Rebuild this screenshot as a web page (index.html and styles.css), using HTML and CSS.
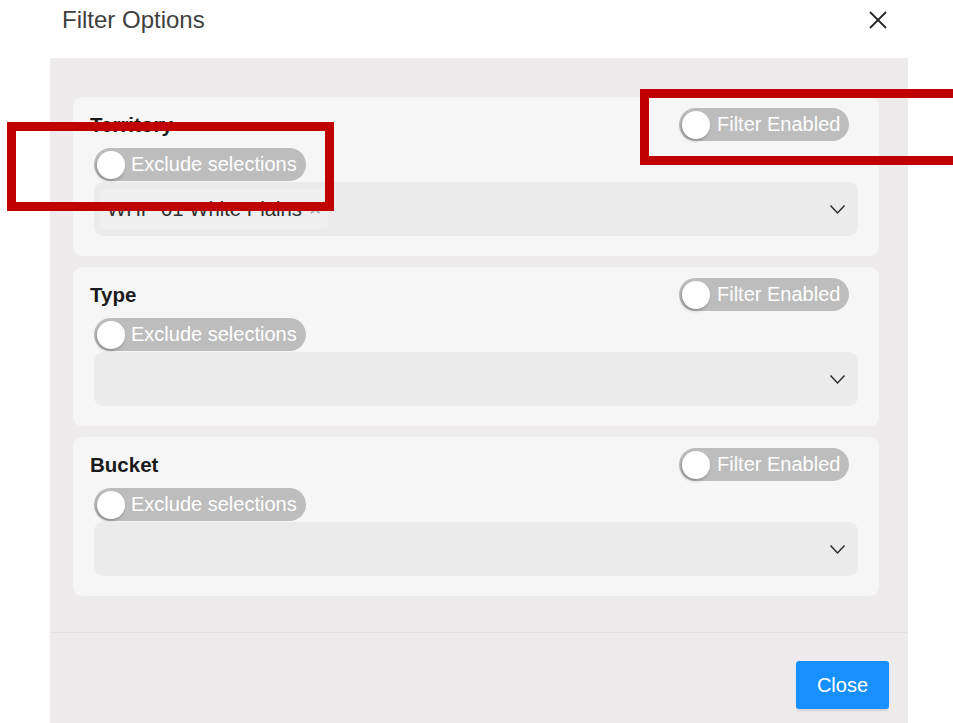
FILE: index.html
```html
<!DOCTYPE html>
<html lang="en">
<head>
<meta charset="utf-8">
<title>Filter Options</title>
<link rel="stylesheet" href="styles.css">
</head>
<body>
<div class="modal">
  <header class="modal-header">
    <h1 class="modal-title">Filter Options</h1>
    <button class="modal-close" aria-label="Close">
      <svg width="20" height="20" viewBox="0 0 20 20"><path d="M2 2 L18 18 M18 2 L2 18" stroke="#262626" stroke-width="1.8" fill="none"/></svg>
    </button>
  </header>

  <div class="modal-panel">
    <div class="modal-body">
      <section class="filter-card">
        <div class="filter-head">
          <span class="filter-label">Territory</span>
          <span class="switch switch-enabled"><span class="knob"></span><span class="switch-text">Filter Enabled</span></span>
        </div>
        <span class="switch switch-exclude"><span class="knob"></span><span class="switch-text">Exclude selections</span></span>
        <div class="select">
          <span class="tag">WHP-01 White Plains <span class="tag-x">×</span></span>
          <svg class="chevron" width="17" height="11" viewBox="0 0 17 11"><path d="M1.5 1.5 L8.5 9 L15.5 1.5" stroke="#2b2b2b" stroke-width="1.5" fill="none"/></svg>
        </div>
      </section>

      <section class="filter-card">
        <div class="filter-head">
          <span class="filter-label">Type</span>
          <span class="switch switch-enabled"><span class="knob"></span><span class="switch-text">Filter Enabled</span></span>
        </div>
        <span class="switch switch-exclude"><span class="knob"></span><span class="switch-text">Exclude selections</span></span>
        <div class="select">
          <svg class="chevron" width="17" height="11" viewBox="0 0 17 11"><path d="M1.5 1.5 L8.5 9 L15.5 1.5" stroke="#2b2b2b" stroke-width="1.5" fill="none"/></svg>
        </div>
      </section>

      <section class="filter-card">
        <div class="filter-head">
          <span class="filter-label">Bucket</span>
          <span class="switch switch-enabled"><span class="knob"></span><span class="switch-text">Filter Enabled</span></span>
        </div>
        <span class="switch switch-exclude"><span class="knob"></span><span class="switch-text">Exclude selections</span></span>
        <div class="select">
          <svg class="chevron" width="17" height="11" viewBox="0 0 17 11"><path d="M1.5 1.5 L8.5 9 L15.5 1.5" stroke="#2b2b2b" stroke-width="1.5" fill="none"/></svg>
        </div>
      </section>
    </div>

    <footer class="modal-footer">
      <button class="btn-primary">Close</button>
    </footer>
  </div>
</div>

<!-- highlight frames drawn over the dialog -->
<div class="highlight highlight-exclude"></div>
<div class="highlight highlight-enabled"></div>
</body>
</html>
```

FILE: styles.css
```css
html, body {
  margin: 0;
  padding: 0;
  height: 100%;
  overflow: hidden;
  background: #ffffff;
  font-family: "Liberation Sans", Arial, sans-serif;
}

.modal {
  position: relative;
  width: 953px;
  height: 723px;
}

.modal-header {
  height: 58px;
  display: flex;
  align-items: flex-start;
  justify-content: space-between;
  padding: 0 65px 0 62px;
  box-sizing: border-box;
}

.modal-title {
  margin: 6px 0 0;
  font-size: 24px;
  font-weight: normal;
  color: #404040;
  line-height: 27px;
}

.modal-close {
  margin-top: 10px;
  padding: 0;
  border: 0;
  background: none;
  width: 20px;
  height: 20px;
  display: block;
}

.modal-close svg { display: block; }

.modal-panel {
  margin-left: 50px;
  width: 858px;
  height: 665px;
  background: #edebeb;
  display: flex;
  flex-direction: column;
}

.modal-body {
  padding: 39px 29px 0 23px;
  height: 575px;
  box-sizing: border-box;
  display: flex;
  flex-direction: column;
  gap: 11px;
  border-bottom: 1px solid #e2e0e0;
}

.filter-card {
  background: #f6f6f6;
  border-radius: 9px;
  padding: 11px 21px 19px 21px;
  display: flex;
  flex-direction: column;
  align-items: flex-start;
  height: 159px;
  box-sizing: border-box;
}

.filter-head {
  align-self: stretch;
  display: flex;
  align-items: center;
  justify-content: space-between;
  height: 33px;
  padding-right: 9px;
}

.filter-label {
  margin-left: -4px;
  font-size: 20.5px;
  font-weight: bold;
  color: #1a1a1a;
}

.switch {
  display: inline-flex;
  align-items: center;
  height: 33px;
  border-radius: 17px;
  background: #bdbdbd;
  box-sizing: border-box;
  padding-left: 3px;
}

.switch-exclude {
  margin-top: 7px;
  width: 212px;
}

.switch-enabled {
  width: 170px;
}

.knob {
  width: 28px;
  height: 28px;
  border-radius: 50%;
  background: #ffffff;
  box-shadow: -1px 2px 3px rgba(0, 0, 0, 0.25);
  flex: none;
}

.switch-text {
  margin-left: 6px;
  color: #ffffff;
  font-size: 20px;
  white-space: nowrap;
}

.switch-enabled .switch-text { margin-left: 7px; }

.select {
  margin-top: 1px;
  align-self: stretch;
  height: 54px;
  border-radius: 9px;
  background: #ecebeb;
  display: flex;
  align-items: center;
  padding: 0 12px 0 6px;
  box-sizing: border-box;
}

.tag {
  height: 40px;
  padding: 0 7px 0 7px;
  display: inline-flex;
  align-items: center;
  background: #f0efef;
  border-radius: 3px;
  font-size: 20.3px;
  color: #2e2e2e;
  white-space: nowrap;
}

.tag-x {
  margin-left: 7px;
  color: #a0a0a0;
  font-size: 21px;
}

.chevron {
  margin-left: auto;
  display: block;
}

.modal-footer {
  flex: 1;
  display: flex;
  justify-content: flex-end;
  align-items: flex-start;
  padding: 28px 19px 0 0;
}

.btn-primary {
  width: 93px;
  height: 48px;
  border: 0;
  border-radius: 3px;
  background: #1890ff;
  color: #ffffff;
  font-family: "Liberation Sans", Arial, sans-serif;
  font-size: 20px;
  box-shadow: 0 2px 2px rgba(0, 0, 0, 0.1);
}

.highlight {
  position: absolute;
  border: 9px solid #c00000;
  box-sizing: border-box;
}

.highlight-exclude {
  left: 7px;
  top: 122px;
  width: 327px;
  height: 89px;
}

.highlight-enabled {
  left: 640px;
  top: 89px;
  width: 340px;
  height: 76px;
}
```
